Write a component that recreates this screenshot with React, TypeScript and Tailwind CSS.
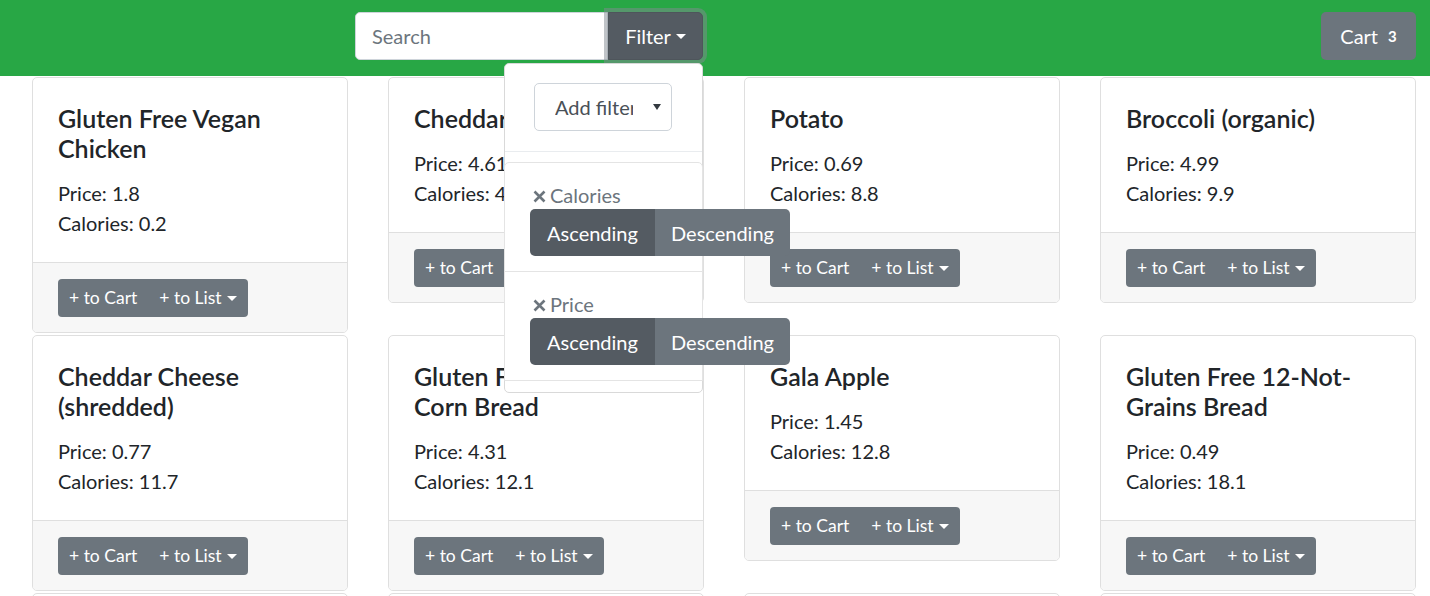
import React from "react";

type Item = { title: string; price: string; cal: string };

const items: Item[] = [
  { title: "Gluten Free Vegan\nChicken", price: "1.8", cal: "0.2" },
  { title: "Cheddar Cheese", price: "4.61", cal: "4.5" },
  { title: "Potato", price: "0.69", cal: "8.8" },
  { title: "Broccoli (organic)", price: "4.99", cal: "9.9" },
  { title: "Cheddar Cheese\n(shredded)", price: "0.77", cal: "11.7" },
  { title: "Gluten Free Vegan\nCorn Bread", price: "4.31", cal: "12.1" },
  { title: "Gala Apple", price: "1.45", cal: "12.8" },
  { title: "Gluten Free 12-Not-\nGrains Bread", price: "0.49", cal: "18.1" },
  { title: "Banana", price: "0.25", cal: "20.3" },
  { title: "Carrots", price: "1.12", cal: "22.4" },
  { title: "Brown Rice", price: "2.35", cal: "24.9" },
  { title: "Almond Milk", price: "3.49", cal: "30.1" },
];

const font = { fontFamily: "Lato, 'Noto Sans', Arial, sans-serif" };

function Caret({ color = "border-t-white" }: { color?: string }) {
  return (
    <span
      className={`inline-block w-0 h-0 border-x-[5px] border-x-transparent border-t-[5px] ${color} ml-[5px] align-[3px]`}
    />
  );
}

function Card({ item }: { item: Item }) {
  return (
    <div className="border border-[#dfdfdf] rounded-[5px] bg-white overflow-hidden">
      <div className="px-[25px] pt-[25px] pb-[24px]">
        <h5 className="text-[25px] leading-[30px] font-semibold text-[#212529] mb-[15px] whitespace-pre-line">
          {item.title}
        </h5>
        <p className="text-[20px] leading-[30px] text-[#212529]">Price: {item.price}</p>
        <p className="text-[20px] leading-[30px] text-[#212529]">Calories: {item.cal}</p>
      </div>
      <div className="border-t border-[#dfdfdf] bg-[#f7f7f7] px-[25px] pt-[16px] pb-[15px]">
        <div className="inline-flex rounded-[4px] overflow-hidden">
          <button className="h-[38px] px-[11px] bg-[#6c757d] text-white text-[17.5px] leading-[26px]">
            + to Cart
          </button>
          <button className="h-[38px] px-[11px] bg-[#6c757d] text-white text-[17.5px] leading-[26px] flex items-center">
            + to List
            <Caret />
          </button>
        </div>
      </div>
    </div>
  );
}

function XIcon() {
  return (
    <svg width="13" height="13" viewBox="0 0 13 13" className="mr-[4px] mt-[3px]">
      <path d="M1.5 1.5 L11.5 11.5 M11.5 1.5 L1.5 11.5" stroke="#6c757d" strokeWidth="2.6" strokeLinecap="butt" />
    </svg>
  );
}

function SortItem({ label, top }: { label: string; top?: boolean }) {
  return (
    <div className={`pl-[25px] pt-[17px] pb-[15px] ${top ? "" : "border-t border-[#e4e4e4]"}`}>
      <div className="flex items-center h-[29px] pl-[3px] text-[20px] text-[#6c757d]">
        <XIcon />
        <span>{label}</span>
      </div>
      <div className="inline-flex w-[260px] h-[47px] rounded-[5px] overflow-hidden text-white text-[20px]">
        <div className="w-[125px] bg-[#545b62] flex items-center justify-center">Ascending</div>
        <div className="flex-1 bg-[#6c757d] flex items-center justify-center">Descending</div>
      </div>
    </div>
  );
}

export default function App() {
  return (
    <div style={font} className="min-h-screen bg-white text-[#212529]">
      <header className="relative z-10 h-[76px] bg-[#28a745] flex items-start justify-between pt-[12px] pr-[14px]">
        <div className="ml-[355px] flex">
          <div className="w-[253px] h-[48px] bg-white border border-[#ced4da] rounded-l-[5px] flex items-center pl-[16px] text-[20px] text-[#6c757d]">
            Search
          </div>
          <div className="relative">
            <button className="h-[48px] w-[95px] bg-[#545b62] border border-[#4e555b] rounded-r-[5px] text-white text-[20px] flex items-center justify-center ring-4 ring-[rgba(130,138,145,0.5)]">
              Filter
              <Caret />
            </button>
            <div className="absolute right-0 top-[51px] w-[199px] bg-white border border-[#d9d9d9] rounded-[5px] pt-[8px] pb-[11px]">
              <div className="px-[29px] pt-[11px] pb-[20px]">
                <div className="h-[48px] w-[138px] border border-[#ced4da] rounded-[5px] flex items-center pl-[20px] pr-[10px] text-[20px] text-[#495057]">
                  <span className="w-[78px] overflow-hidden whitespace-nowrap">Add filter</span>
                  <span className="ml-auto inline-block w-0 h-0 border-x-[4px] border-x-transparent border-t-[6px] border-t-[#343a40]" />
                </div>
              </div>
              <div className="border-t border-[#e9ecef] mb-[10px]" />
              <div className="border border-[#e4e4e4] rounded-t-[5px] -mx-px">
                <SortItem label="Calories" top />
                <SortItem label="Price" />
              </div>
            </div>
          </div>
        </div>
        <button className="h-[48px] w-[95px] bg-[#6c757d] rounded-[5px] text-white text-[20px] flex items-center justify-center">
          Cart
          <span className="ml-[10px] text-[15px] font-bold">3</span>
        </button>
      </header>
      <main className="grid grid-cols-[repeat(4,316px)] gap-x-[40px] gap-y-[2px] items-start pl-[32px] pt-px">
        {items.map((it, i) => (
          <Card key={i} item={it} />
        ))}
      </main>
    </div>
  );
}
